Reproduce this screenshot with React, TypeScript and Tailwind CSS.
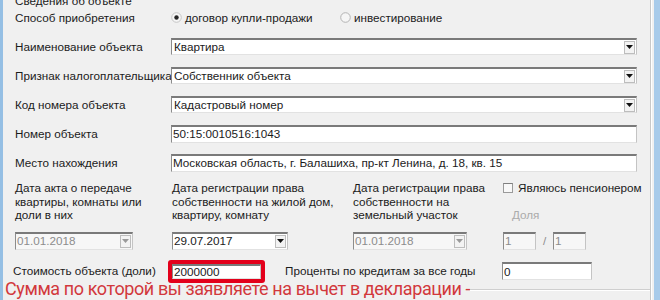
const ui = "font-['Liberation_Sans',Arial,sans-serif] text-[11.7px] text-[#1b1b1b]"

function Arrow({ disabled }: { disabled?: boolean }) {
  return (
    <svg width="7" height="4" viewBox="0 0 7 4">
      <path d="M0 0h7L3.5 4z" fill={disabled ? '#9a9a9a' : '#111'} />
    </svg>
  )
}

function DropButton({ disabled }: { disabled?: boolean }) {
  return (
    <div className="mr-px flex h-[13px] w-[11px] shrink-0 items-center justify-center border border-[#bdbdbd] bg-[#f3f3f3]">
      <Arrow disabled={disabled} />
    </div>
  )
}

const sunken =
  'border-t-2 border-l border-t-[#7a7a7a] border-l-[#8c8c8c] border-r border-b border-r-[#c4c4c4] border-b-[#e2e2e2]'

function Combo({ value }: { value: string }) {
  return (
    <div className={`flex h-[17px] w-[466px] items-center bg-white ${sunken}`}>
      <span className="flex-1 pl-[2px] leading-none">{value}</span>
      <DropButton />
    </div>
  )
}

function TextBox({ value, className = '' }: { value: string; className?: string }) {
  return (
    <div className={`flex h-[18px] items-center bg-white ${sunken} ${className}`}>
      <span className="pl-[1px] leading-none">{value}</span>
    </div>
  )
}

function DateBox({ value, width, disabled }: { value: string; width: string; disabled?: boolean }) {
  return (
    <div className={`flex h-[18px] items-center ${disabled ? 'bg-[#f7f7f7]' : 'bg-white'} ${sunken} ${width}`}>
      <span className={`flex-1 pl-[1px] leading-none ${disabled ? 'text-[#8d8d8d]' : ''}`}>{value}</span>
      <DropButton disabled={disabled} />
    </div>
  )
}

function Radio({ checked }: { checked?: boolean }) {
  return (
    <svg width="11" height="11" viewBox="0 0 11 11" className="shrink-0">
      <circle cx="5.5" cy="5.5" r="4.8" fill="#f6f6f6" stroke={checked ? '#c6c6c6' : '#b4b4b4'} strokeWidth="1" />
      {checked && <circle cx="5.5" cy="5.5" r="2.2" fill="#262626" />}
    </svg>
  )
}

function Row({ label, children }: { label: string; children: React.ReactNode }) {
  return (
    <div className="grid h-[29px] grid-cols-[156px_466px] items-center">
      <span className="whitespace-nowrap">{label}</span>
      {children}
    </div>
  )
}

export default function App() {
  return (
    <div className={`flex h-[300px] w-[660px] overflow-hidden bg-[#f0f0f0] ${ui}`}>
      <div className="w-[3px] bg-[#95bfe4]" />

      <div className="flex w-[647px] flex-col pl-[12px]">
        {/* group caption, cut at the top */}
        <div className="h-[3px]">
          <div className="-mt-[6px] leading-[13px]">Сведения об объекте</div>
        </div>

        <div className="grid h-[29px] grid-cols-[156px_466px] items-center">
          <span>Способ приобретения</span>
          <div className="flex items-center">
            <div className="flex w-[169px] items-center gap-[3px]">
              <Radio checked />
              <span>договор купли-продажи</span>
            </div>
            <div className="flex items-center gap-[3px]">
              <Radio />
              <span>инвестирование</span>
            </div>
          </div>
        </div>

        <Row label="Наименование объекта">
          <Combo value="Квартира" />
        </Row>
        <Row label="Признак налогоплательщика">
          <Combo value="Собственник объекта" />
        </Row>
        <Row label="Код номера объекта">
          <Combo value="Кадастровый номер" />
        </Row>
        <Row label="Номер объекта">
          <TextBox value="50:15:0010516:1043" className="w-[466px]" />
        </Row>
        <Row label="Место нахождения">
          <TextBox value="Московская область, г. Балашиха, пр-кт Ленина, д. 18, кв. 15" className="w-[466px]" />
        </Row>

        {/* dates */}
        <div className="mt-[4px] grid grid-cols-[157px_181px_150px_1fr] leading-[13.5px]">
          <div>
            Дата акта о передаче
            <br />
            квартиры, комнаты или
            <br />
            доли в них
          </div>
          <div>
            Дата регистрации права
            <br />
            собственности на жилой дом,
            <br />
            квартиру, комнату
          </div>
          <div>
            Дата регистрации права
            <br />
            собственности на
            <br />
            земельный участок
          </div>
          <div className="flex flex-col">
            <div className="flex h-[13.5px] items-center gap-[5px]">
              <div className="h-[10px] w-[10px] border border-[#9a9a9a] border-t-[#7f7f7f] bg-[#f8f8f8]" />
              <span>Являюсь пенсионером</span>
            </div>
            <div className="h-[13.5px]" />
            <div className="h-[13.5px] pl-[9px] text-[#ababab]">Доля</div>
          </div>
        </div>

        <div className="mt-[10px] grid h-[18px] grid-cols-[157px_181px_150px_1fr]">
          <DateBox value="01.01.2018" width="w-[118px]" disabled />
          <DateBox value="29.07.2017" width="w-[116px]" />
          <DateBox value="01.01.2018" width="w-[114px]" disabled />
          <div className="flex items-center">
            <div className={`flex h-[18px] w-[33px] items-center bg-[#f7f7f7] ${sunken}`}>
              <span className="pl-[1px] leading-none text-[#8d8d8d]">1</span>
            </div>
            <span className="w-[17px] text-center text-[#8d8d8d]">/</span>
            <div className={`flex h-[18px] w-[33px] items-center bg-[#f7f7f7] ${sunken}`}>
              <span className="pl-[1px] leading-none text-[#8d8d8d]">1</span>
            </div>
          </div>
        </div>

        {/* cost */}
        <div className="mt-[10px] -ml-[2px] flex h-[23px] items-center">
          <span className="w-[155px]">Стоимость объекта (доли)</span>
          <div className="h-[23px] w-[97px] rounded-[3px] border-[4px] border-[#e3001b]">
            <TextBox value="2000000" className="h-full w-full" />
          </div>
          <span className="ml-[20px] w-[217px]">Проценты по кредитам за все годы</span>
          <TextBox value="0" className="w-[90px]" />
        </div>

        {/* note */}
        <div className="-mt-[4px] -ml-[10px] flex items-start">
          <span className="whitespace-nowrap font-['Roboto',sans-serif] text-[18px] leading-[20px] tracking-[-0.4px] text-[#d2383c]">
            Сумма по которой вы заявляете на вычет в декларации -
          </span>
          <div className="mt-[10px] h-[2px] flex-1 border-t border-b border-t-[#cfcfcf] border-b-white" />
        </div>
      </div>

      <div className="w-px bg-[#c8c8c8]" />
      <div className="w-px bg-white" />
      <div className="w-[2px]" />
      <div className="w-[6px] bg-[#a8cbea]" />
    </div>
  )
}
